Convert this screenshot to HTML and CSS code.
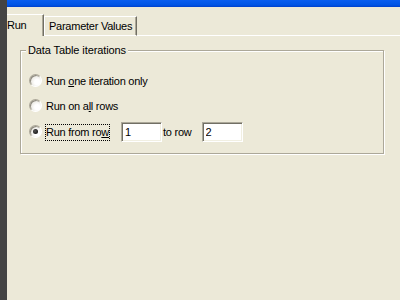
FILE: index.html
```html
<!DOCTYPE html>
<html lang="en">
<head>
    <meta charset="UTF-8">
    <title>Run Settings</title>
    <link rel="stylesheet" href="styles.css">
</head>
<body>
    <div class="window">
        <div class="frame"></div>
        <div class="main">
            <div class="titlebar"></div>

            <div class="tabs">
                <div class="tab active">Run</div>
                <div class="tab">Parameter Values</div>
                <div class="tab-fill"></div>
            </div>

            <fieldset class="group">
                <legend>Data Table iterations</legend>
                <div class="options">
                    <div class="option">
                        <span class="radio"></span>
                        <span class="label">Run <u>o</u>ne iteration only</span>
                    </div>
                    <div class="option">
                        <span class="radio"></span>
                        <span class="label">Run on a<u>l</u>l rows</span>
                    </div>
                    <div class="option range">
                        <span class="radio checked"></span>
                        <span class="label focus">Run from ro<u>w</u></span>
                        <input class="field" type="text" value="1">
                        <span class="to">to row</span>
                        <input class="field" type="text" value="2">
                    </div>
                </div>
            </fieldset>
        </div>
    </div>
</body>
</html>
```

FILE: styles.css
```css
* {
    margin: 0;
    padding: 0;
    box-sizing: border-box;
}

body {
    font-family: "Liberation Sans", Arial, sans-serif;
    font-size: 11px;
    line-height: 13px;
    background: #ECE9D8;
    color: #000;
}

.window {
    display: flex;
    height: 300px;
}

.frame {
    width: 7px;
    background: #444444;
}

.main {
    flex: 1;
    display: flex;
    flex-direction: column;
}

.titlebar {
    height: 7px;
    background: linear-gradient(#0A5EEF, #0055E5 70%, #0040CC);
}

/* tab strip */
.tabs {
    display: flex;
    align-items: flex-end;
    height: 29px;
    letter-spacing: -0.25px;
}

.tab {
    height: 20px;
    padding: 3px 4px 0;
    border: 1px solid #fff;
    border-right-color: #716F64;
    box-shadow: inset -1px 0 #ACA899;
    white-space: nowrap;
}

.tab.active {
    width: 37px;
    height: 22px;
    padding: 4px 0 0;
    border-left: none;
    border-bottom: none;
}

.tab-fill {
    flex: 1;
    border-bottom: 1px solid #fff;
}

/* group box */
.group {
    margin: 8px 16px 0 13px;
    border: 1px solid #ACA899;
    box-shadow: inset 1px 1px #fff, 1px 1px #fff;
}

.group legend {
    margin-left: 5px;
    padding: 0 2px;
    background: #ECE9D8;
    letter-spacing: -0.1px;
}

.options {
    display: flex;
    flex-direction: column;
    gap: 5px;
    padding: 14px 0 11px 8px;
    letter-spacing: -0.25px;
}

.option {
    display: flex;
    align-items: center;
    height: 20px;
}

.option.range {
    margin-top: 1px;
}

.radio {
    width: 13px;
    height: 13px;
    margin-right: 3px;
    margin-top: -2px;
    border-radius: 50%;
    border: 1px solid;
    border-color: #ACA899 #fff #fff #ACA899;
    background: radial-gradient(circle at 65% 65%, #fff 25%, #D8D5C8 100%);
    box-shadow: inset 1px 1px #8E8B80;
    display: flex;
    align-items: center;
    justify-content: center;
}

.radio.checked::after {
    content: "";
    width: 5px;
    height: 5px;
    border-radius: 50%;
    background: radial-gradient(circle at 40% 40%, #555, #000);
}

.label {
    padding: 1px 0;
    border: 1px dotted transparent;
    white-space: nowrap;
}

.label.focus {
    border-color: #000;
}

.field {
    width: 41px;
    height: 20px;
    margin-left: 10px;
    padding: 0 3px;
    font: inherit;
    color: #000;
    background: #fff;
    border: 1px solid;
    border-color: #ACA899 #fff #fff #ACA899;
    box-shadow: inset 1px 1px #716F64, inset -1px -1px #F1EFE2;
    outline: none;
}

.field:first-of-type {
    margin-left: 11px;
}

.to {
    margin-left: 1px;
}
```
